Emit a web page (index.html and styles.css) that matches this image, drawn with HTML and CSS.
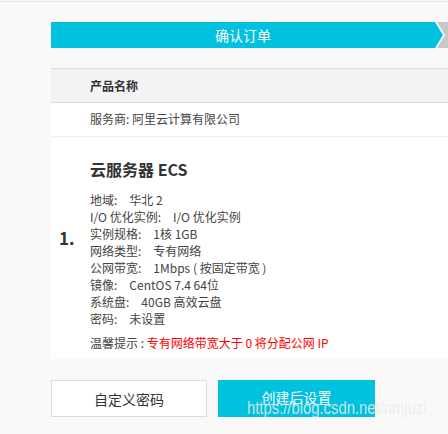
FILE: index.html
```html
<!DOCTYPE html>
<html lang="zh">
<head>
<meta charset="utf-8">
<link rel="stylesheet" href="styles.css">
</head>
<body>
<div class="topline"></div>
<div class="main">
  <div class="banner">
    <div class="banner-fill">确认订单</div>
    <svg class="banner-arrow" width="13" height="26" viewBox="0 0 13 26">
      <rect x="0" y="0" width="13" height="26" fill="#c8c8c8"/>
      <polygon points="0,0 1,0 9,13 1,26 0,26" fill="#00c1de"/>
      <polyline points="1,0 9,13 1,26" fill="none" stroke="#ffffff" stroke-width="1.6"/>
    </svg>
  </div>
  <div class="table">
    <div class="thead">产品名称</div>
    <div class="row-vendor">服务商: 阿里云计算有限公司</div>
    <div class="product">
      <div class="index">1.</div>
      <div class="detail">
        <div class="title">云服务器 ECS</div>
        <ul class="specs">
          <li><span class="k">地域:</span>华北 2</li>
          <li><span class="k">I/O 优化实例:</span>I/O 优化实例</li>
          <li><span class="k">实例规格:</span>1核 1GB</li>
          <li><span class="k">网络类型:</span>专有网络</li>
          <li><span class="k">公网带宽:</span>1Mbps ( 按固定带宽 )</li>
          <li><span class="k">镜像:</span>CentOS 7.4 64位</li>
          <li><span class="k">系统盘:</span>40GB 高效云盘</li>
          <li><span class="k">密码:</span>未设置</li>
        </ul>
        <div class="tip">温馨提示 : <span class="red">专有网络带宽大于 0 将分配公网 IP</span></div>
      </div>
    </div>
  </div>
  <div class="actions">
    <div class="btn btn-ghost">自定义密码</div>
    <div class="btn btn-primary">创建后设置</div>
  </div>
  <div class="watermark">https://blog.csdn.net/nmjuzi</div>
</div>
</body>
</html>
```
FILE: styles.css
```css
html, body {
  margin: 0;
  padding: 0;
}
body {
  background: #faf9f8;
  font-family: "Noto Sans CJK SC", "Noto Sans", sans-serif;
  color: #333;
  font-size: 12px;
  width: 448px;
  height: 434px;
  overflow: hidden;
  position: relative;
}
.topline {
  margin-top: 1px;
  height: 1px;
  background: #e6e6e6;
}
.main {
  margin-left: 51px;
}
.banner {
  margin-top: 20px;
  height: 26px;
  display: flex;
}
.banner-fill {
  width: 384px;
  background: #00c1de;
  color: #fff;
  font-size: 14px;
  line-height: 26px;
  text-align: center;
}
.banner-arrow {
  display: block;
  flex: 1;
}
.table {
  margin-top: 20px;
  background: #fff;
}
.thead {
  background: #f3f3f3;
  border-top: 1px solid #dcdcdc;
  border-bottom: 1px solid #dcdcdc;
  height: 33px;
  line-height: 33px;
  padding-left: 39px;
  font-weight: bold;
  font-size: 12px;
  color: #333;
}
.row-vendor {
  height: 33px;
  line-height: 32px;
  padding-left: 39px;
  border-bottom: 1px solid #f0f0f0;
  color: #444;
}
.product {
  display: flex;
  align-items: flex-start;
  padding: 21px 0 8px 8px;
}
.index {
  width: 31px;
  font-size: 17px;
  line-height: 24px;
  font-weight: bold;
  color: #333;
  margin-top: 68px;
}
.title {
  font-size: 16px;
  font-weight: bold;
  line-height: 22px;
  color: #333;
  margin-bottom: 11px;
}
.specs {
  list-style: none;
  margin: 0;
  padding: 0;
}
.specs li {
  height: 17px;
  line-height: 17px;
  color: #444;
}
.k {
  margin-right: 12px;
}
.tip {
  margin-top: 7px;
  height: 17px;
  line-height: 17px;
  color: #444;
}
.red {
  color: #ff0000;
}
.actions {
  margin-top: 21px;
  display: flex;
  gap: 11px;
}
.btn {
  height: 37px;
  line-height: 37px;
  text-align: center;
  font-size: 14px;
  box-sizing: border-box;
}
.btn-ghost {
  width: 156px;
  background: #fff;
  border: 1px solid #dcdcdc;
  color: #333;
}
.btn-primary {
  width: 157px;
  background: #00c1de;
  color: #fff;
  line-height: 34px;
}
.watermark {
  position: absolute;
  left: 247px;
  top: 397px;
  font-family: "Liberation Sans", sans-serif;
  font-size: 19px;
  color: rgba(235, 235, 235, 0.85);
  white-space: nowrap;
  transform: scaleX(0.78);
  transform-origin: left top;
}
```
